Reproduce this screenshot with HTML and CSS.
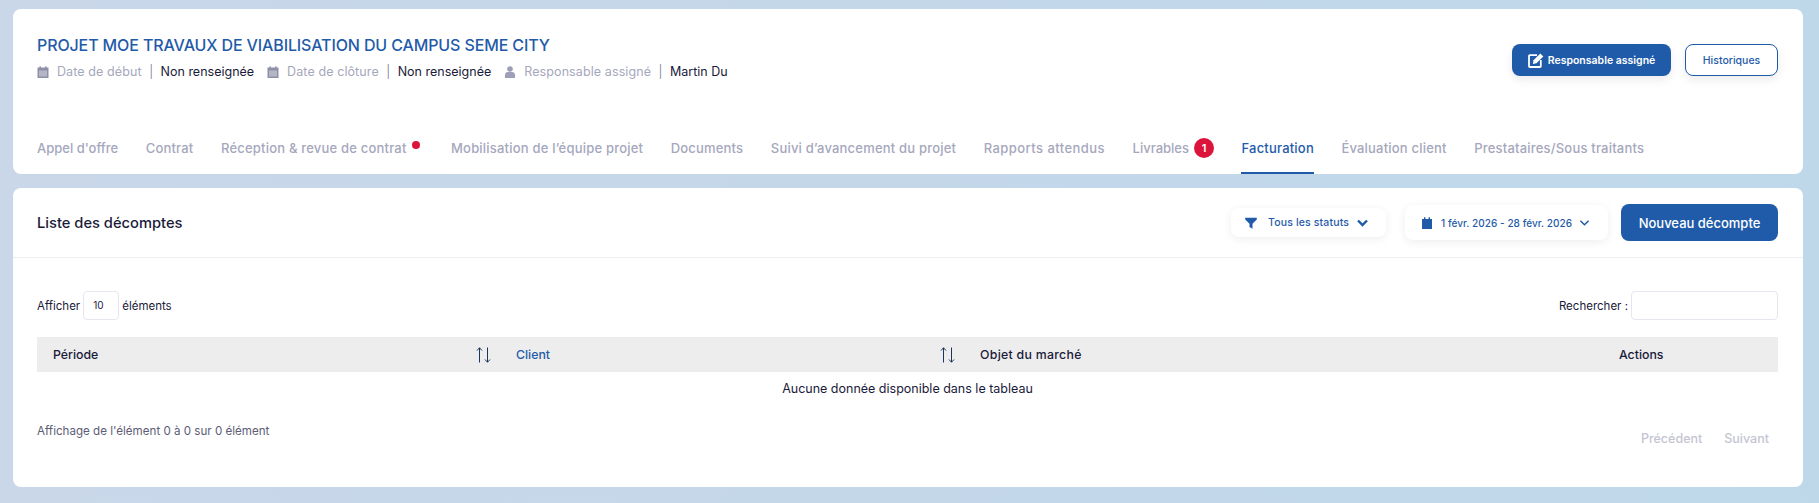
FILE: index.html
```html
<!DOCTYPE html>
<html lang="fr">
<head>
    <meta charset="UTF-8">
    <title>Facturation</title>
    <link rel="stylesheet" href="styles.css">
</head>
<body>
    <section class="card project">
        <div class="project-head">
            <div>
                <h1>PROJET MOE TRAVAUX DE VIABILISATION DU CAMPUS SEME CITY</h1>
                <div class="meta">
                    <svg class="meta-icon" viewBox="0 0 12 12"><path d="M.5 1.500h2V.2h1.300v1.300h4.400V.2h1.300v1.300h2V12H.5z" fill="#8e90a6"/><rect x="2" y="4.500" width="8" height="6" fill="#b4b6c6"/></svg>
                    <span class="meta-label">Date de début</span><span class="meta-sep">|</span><span class="meta-value">Non renseignée</span>
                    <svg class="meta-icon" viewBox="0 0 12 12"><path d="M.5 1.500h2V.2h1.300v1.300h4.400V.2h1.300v1.300h2V12H.5z" fill="#8e90a6"/><rect x="2" y="4.500" width="8" height="6" fill="#b4b6c6"/></svg>
                    <span class="meta-label">Date de clôture</span><span class="meta-sep">|</span><span class="meta-value">Non renseignée</span>
                    <svg class="meta-icon" viewBox="0 0 12 12"><circle cx="6" cy="3" r="2.800" fill="#9d9fb8"/><path d="M1 12V9c0-1.800 1.300-2.900 2.800-2.900h4.400C9.700 6.100 11 7.200 11 9v3z" fill="#9d9fb8"/></svg>
                    <span class="meta-label">Responsable assigné</span><span class="meta-sep">|</span><span class="meta-value">Martin Du</span>
                </div>
            </div>
            <div class="project-actions">
                <button class="btn btn-primary">
                    <svg class="edit-icon" viewBox="0 0 17 16"><path d="M9 3.200H1.800a.8.8 0 0 0-.8.8v10.200c0 .4.400.8.8.8H12a.8.8 0 0 0 .8-.8V8" fill="none" stroke="#fff" stroke-width="1.800"/><path d="M5.500 8.300 12.300 1.500l3 3-6.800 6.800-3.600.7z" fill="#fff"/></svg>
                    Responsable assigné
                </button>
                <button class="btn btn-outline">Historiques</button>
            </div>
        </div>
        <nav class="tabs">
            <a class="tab tab-tight">Appel d'offre</a>
            <a class="tab">Contrat</a>
            <a class="tab">Réception &amp; revue de contrat<span class="dot"></span></a>
            <a class="tab">Mobilisation de l’équipe projet</a>
            <a class="tab">Documents</a>
            <a class="tab">Suivi d’avancement du projet</a>
            <a class="tab tab-wide">Rapports attendus</a>
            <a class="tab tab-tight">Livrables<span class="badge">1</span></a>
            <a class="tab active">Facturation</a>
            <a class="tab">Évaluation client</a>
            <a class="tab">Prestataires/Sous traitants</a>
        </nav>
    </section>

    <section class="card list">
        <header class="list-head">
            <h2>Liste des décomptes</h2>
            <div class="filter filter-status">
                <svg class="filter-icon" viewBox="0 0 12 12"><path d="M.2 .8h11.600v1.800L7.500 6.800V11.800L4.500 10V6.800L.2 2.600z" fill="#1f5ba9"/></svg>
                Tous les statuts
                <svg class="chevron chevron-bold" viewBox="0 0 12 8"><path d="M1.500 1.500 6 6l4.500-4.500" /></svg>
            </div>
            <div class="filter filter-date">
                <svg class="filter-icon" viewBox="0 0 12 12"><path d="M1 2h2V.3h1.400V2h3.200V.3H9V2h2v10H1z" fill="#1f5ba9"/></svg>
                1 févr. 2026 - 28 févr. 2026
                <svg class="chevron" viewBox="0 0 12 8"><path d="M1.500 1.500 6 6l4.500-4.500" /></svg>
            </div>
            <button class="btn-new">Nouveau décompte</button>
        </header>
        <div class="list-body">
            <div class="table-tools">
                <div class="tool">Afficher <span class="page-size">10</span> éléments</div>
                <div class="tool">Rechercher : <input class="search" type="text"></div>
            </div>
            <table class="table">
                <thead>
                    <tr>
                        <th class="col-period"><div class="th-inner">Période
                            <svg class="sort" viewBox="0 0 16 16"><path d="M3.500 15.500V.8M1 3.500 3.500.8 6 3.500M11.500.5v14.700M9 12.500l2.500 2.700 2.500-2.700"/></svg>
                        </div></th>
                        <th class="col-client"><div class="th-inner">Client
                            <svg class="sort" viewBox="0 0 16 16"><path d="M3.500 15.500V.8M1 3.500 3.500.8 6 3.500M11.500.5v14.700M9 12.500l2.500 2.700 2.500-2.700"/></svg>
                        </div></th>
                        <th class="col-object">Objet du marché</th>
                        <th class="col-actions">Actions</th>
                    </tr>
                </thead>
                <tbody>
                    <tr><td colspan="4">Aucune donnée disponible dans le tableau</td></tr>
                </tbody>
            </table>
            <div class="table-foot">
                <div class="info">Affichage de l'élément 0 à 0 sur 0 élément</div>
                <div class="pager"><span>Précédent</span><span>Suivant</span></div>
            </div>
        </div>
    </section>
</body>
</html>
```

FILE: styles.css
```css
* {
    box-sizing: border-box;
}

body {
    font-family: Inter, "Open Sans", sans-serif;
    background: linear-gradient(90deg, #c9d7e9 0%, #bed8ea 100%);
    color: #1a1a3a;
    margin: 0;
    padding: 9px 16px 16px 13px;
    height: 503px;
    overflow: hidden;
}

.card {
    background: #fff;
    border-radius: 8px;
}

/* bloc projet */
.project {
    height: 165px;
    padding: 0 25px 0 24px;
}

.project-head {
    display: flex;
    justify-content: space-between;
    padding-top: 25px;
}

h1 {
    margin: 0;
    font-size: 16px;
    line-height: 22px;
    font-weight: 500;
    letter-spacing: -0.12px;
    color: #1f5ba9;
}

.meta {
    display: flex;
    align-items: center;
    margin-top: 6px;
    font-size: 12.500px;
    line-height: 20px;
}

.meta-icon {
    width: 12px;
    height: 12px;
    margin-right: 8px;
}

.meta-label {
    color: #a5a7bd;
    letter-spacing: 0.1px;
}

.meta-sep {
    color: #6f7190;
    font-weight: 300;
    margin: 0 7.500px;
}

.meta-value {
    margin-right: 13px;
}

.project-actions {
    display: flex;
    gap: 14px;
    padding-top: 10px;
}

.btn {
    height: 32px;
    border-radius: 8px;
    font-family: inherit;
    font-size: 10.500px;
    font-weight: 600;
    box-shadow: 0 4px 10px rgba(0, 0, 0, 0.08);
}

.btn-primary {
    display: flex;
    align-items: center;
    justify-content: center;
    gap: 3px;
    width: 159px;
    background: #1f5ba9;
    border: none;
    color: #fff;
}

.edit-icon {
    width: 17px;
    height: 16px;
}

.btn-outline {
    width: 93px;
    background: #fff;
    border: 1px solid #1f5ba9;
    color: #1f5ba9;
    font-weight: 500;
}

.tabs {
    display: flex;
    gap: 27.500px;
    margin-top: 46px;
    font-size: 13px;
    line-height: 20px;
    font-weight: 500;
    letter-spacing: 0.2px;
}

.tab {
    display: flex;
    align-items: flex-start;
    padding: 10px 0 14px;
    border-bottom: 2px solid transparent;
    color: #a5a7bd;
}

.tab-tight {
    letter-spacing: 0;
}

.tab-wide {
    letter-spacing: 0.45px;
}

.tab.active {
    color: #1f5ba9;
    border-bottom-color: #1f5ba9;
}

.dot {
    width: 8px;
    height: 8px;
    border-radius: 50%;
    background: #dc143c;
    margin: 3px 4px 0 5px;
}

.badge {
    width: 20px;
    height: 20px;
    border-radius: 50%;
    background: #dc143c;
    color: #fff;
    font-size: 11px;
    font-weight: 600;
    text-align: center;
    margin-left: 5px;
}

/* liste des décomptes */
.list {
    height: 299px;
    margin-top: 14px;
}

.list-head {
    display: flex;
    align-items: center;
    height: 70px;
    padding: 0 25px 0 24px;
    border-bottom: 1px solid #eeeef2;
}

h2 {
    margin: 0 auto 0 0;
    font-size: 14.700px;
    font-weight: 500;
}

.filter {
    display: flex;
    align-items: center;
    border-radius: 8px;
    background: #fff;
    color: #1f5ba9;
    font-size: 10px;
    font-weight: 500;
    box-shadow: 0 2px 10px rgba(0, 0, 0, 0.07);
}

.filter-status {
    width: 155px;
    height: 29px;
    padding-left: 14px;
    margin-right: 19px;
    font-size: 10.500px;
    letter-spacing: 0.15px;
}

.filter-status .filter-icon {
    margin-right: 11px;
}

.filter-date {
    width: 203px;
    height: 35px;
    padding-left: 16px;
    margin-right: 13px;
    letter-spacing: 0.05px;
}

.filter-icon {
    width: 12px;
    height: 12px;
    margin-right: 8px;
}

.chevron {
    width: 11px;
    height: 8px;
    margin-left: 7px;
    fill: none;
    stroke: #1f5ba9;
    stroke-width: 1.600;
}

.chevron-bold {
    width: 13px;
    stroke-width: 2.400;
}

.btn-new {
    width: 157px;
    height: 37px;
    border: none;
    border-radius: 8px;
    background: #1f5ba9;
    color: #fff;
    font-family: inherit;
    font-size: 13px;
    font-weight: 500;
}

.list-body {
    padding: 33px 25px 0 24px;
}

.table-tools {
    display: flex;
    justify-content: space-between;
    align-items: center;
    height: 29px;
    font-size: 11.500px;
}

.tool {
    display: flex;
    align-items: center;
    gap: 3px;
}

.page-size {
    width: 36px;
    height: 29px;
    border: 1px solid #e6e6f0;
    border-radius: 4px;
    line-height: 27px;
    padding-left: 9px;
    font-size: 10px;
}

.search {
    width: 147px;
    height: 29px;
    border: 1px solid #e6e6f0;
    border-radius: 4px;
}

.table {
    width: 100%;
    margin-top: 17px;
    border-collapse: collapse;
    table-layout: fixed;
    font-size: 12.300px;
}

.table th {
    height: 35px;
    padding: 0 0 0 16px;
    background: #ededed;
    text-align: left;
    font-weight: 500;
}

.col-period {
    width: 463px;
}

.col-client {
    width: 464px;
    color: #1f5ba9;
}

.col-object {
    width: 639px;
    letter-spacing: 0.3px;
}

.th-inner {
    display: flex;
    align-items: center;
    justify-content: space-between;
    padding-right: 8px;
}

.sort {
    width: 16px;
    height: 16px;
    fill: none;
    stroke: #1c3560;
    stroke-width: 1;
}

.table td {
    height: 33px;
    padding: 0;
    text-align: center;
    font-size: 12.500px;
}

.table-foot {
    display: flex;
    justify-content: space-between;
    align-items: flex-start;
    margin-top: 15px;
    font-size: 11.600px;
    line-height: 22px;
}

.info {
    color: #5d5d75;
}

.pager {
    display: flex;
    gap: 22px;
    padding: 8px 9px 0 0;
    color: #c4c5d2;
    font-size: 12.500px;
    font-weight: 500;
}
```
